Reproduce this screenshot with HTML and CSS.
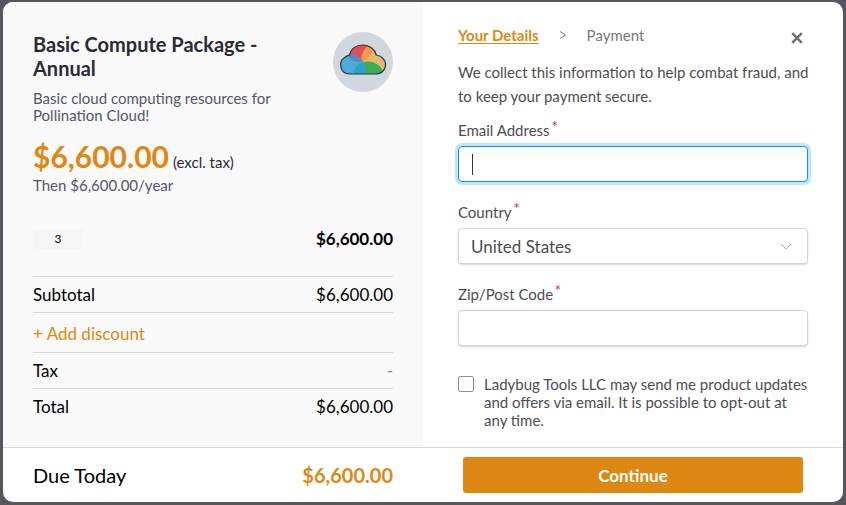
FILE: index.html
```html
<!DOCTYPE html>
<html lang="en">
<head>
<meta charset="utf-8">
<title>Checkout</title>
<link rel="stylesheet" href="styles.css">
</head>
<body>
<form class="checkout">
  <div class="panels">
    <section class="summary">
      <header class="product">
        <div class="product-text">
          <h1 class="product-name">Basic Compute Package - Annual</h1>
          <p class="product-desc">Basic cloud computing resources for Pollination Cloud!</p>
        </div>
        <svg class="product-logo" viewBox="0 0 60 60" aria-hidden="true">
          <defs>
            <clipPath id="cloud"><path d="M16.500 42A9 9 0 0 1 12 25.300Q13.800 23.700 16.500 23.200C18 16.500 23.500 13 29.800 13C36.300 13 41.700 16.800 43.300 23Q47.500 23.700 49.700 26.200A9.200 9.200 0 0 1 43.700 42Z"/></clipPath>
          </defs>
          <circle cx="30" cy="30" r="30" fill="#d0d7df"/>
          <g clip-path="url(#cloud)">
            <rect width="60" height="60" fill="#e8b76c"/>
            <circle cx="23" cy="13" r="17" fill="#e64c55"/>
            <path d="M37 12C31 16 27.500 23 28.500 30C35 28 40 21 40 12Z" fill="#f19a4e"/>
            <circle cx="35" cy="46" r="16.500" fill="#3fab55"/>
            <circle cx="16" cy="40" r="17" fill="#4aaedd"/>
            <path d="M14 23.500C20 20.500 27 23.500 30 29.500C23 31.500 17 28 14 23.500Z" fill="#5e89bd"/>
            <path d="M30 29.500C25 31 20.500 37 20 43H32.500C34 38 33 33 30 29.500Z" fill="#30a3c0"/>
          </g>
          <path d="M16.500 42A9 9 0 0 1 12 25.300Q13.800 23.700 16.500 23.200C18 16.500 23.500 13 29.800 13C36.300 13 41.700 16.800 43.300 23Q47.500 23.700 49.700 26.200A9.200 9.200 0 0 1 43.700 42Z" fill="none" stroke="#333238" stroke-width="1.200"/>
        </svg>
      </header>
      <p class="price"><strong class="price-amount">$6,600.00</strong> <span class="price-note">(excl. tax)</span></p>
      <p class="recurring">Then $6,600.00/year</p>
      <div class="line-item">
        <input class="quantity" type="text" value="3" aria-label="Quantity">
        <strong class="line-amount">$6,600.00</strong>
      </div>
      <div class="totals">
        <div class="row"><span>Subtotal</span><span>$6,600.00</span></div>
        <div class="row row-discount"><button class="discount" type="button">+ Add discount</button></div>
        <div class="row"><span>Tax</span><span class="muted">-</span></div>
        <div class="row"><span>Total</span><span>$6,600.00</span></div>
      </div>
    </section>
    <section class="details">
      <nav class="steps">
        <a class="step-current" href="#details">Your Details</a>
        <svg class="step-arrow" viewBox="0 0 8 10" aria-hidden="true"><path d="M1 1.500L6.500 5L1 8.500"/></svg>
        <span class="step-next">Payment</span>
        <button class="close" type="button" aria-label="Close"><svg viewBox="0 0 12 12" aria-hidden="true"><path d="M1.200 1.200L10.800 10.800M10.800 1.200L1.200 10.800"/></svg></button>
      </nav>
      <p class="intro">We collect this information to help combat fraud, and to keep your payment secure.</p>
      <div class="field">
        <label class="label" for="email">Email Address<span class="required">*</span></label>
        <input class="control" id="email" type="email" autofocus>
      </div>
      <div class="field">
        <label class="label" for="country">Country<span class="required">*</span></label>
        <select class="control select" id="country"><option>United States</option></select>
      </div>
      <div class="field">
        <label class="label" for="zip">Zip/Post Code<span class="required">*</span></label>
        <input class="control" id="zip" type="text">
      </div>
      <div class="consent">
        <input class="checkbox" id="updates" type="checkbox">
        <label for="updates">Ladybug Tools LLC may send me product updates and offers via email. It is possible to opt-out at any time.</label>
      </div>
    </section>
  </div>
  <footer class="footer">
    <div class="due"><span>Due Today</span><strong class="due-amount">$6,600.00</strong></div>
    <div class="action"><button class="continue" type="submit">Continue</button></div>
  </footer>
</form>
</body>
</html>
```
FILE: styles.css
```css
* {
  box-sizing: border-box;
}

body {
  margin: 0;
  padding: 2px 3px 3px;
  background: #57565f;
  font-family: Lato, "Liberation Sans", sans-serif;
  font-size: 15px;
  color: #4d4d4f;
}

h1,
p {
  margin: 0;
}

button,
input,
select {
  font: inherit;
}

.checkout {
  background: #fff;
  border-radius: 10px;
  overflow: hidden;
}

.panels,
.footer {
  display: grid;
  grid-template-columns: 1fr 1fr;
}

.summary {
  padding: 30px 30px 23px;
  background: #f9f9f9;
  color: #000;
}

.product {
  display: flex;
  justify-content: space-between;
  align-items: flex-start;
  gap: 50px;
}

.product-name {
  font-size: 20px;
  line-height: 24px;
  color: #2b2a35;
}

.product-desc {
  margin-top: 10px;
  line-height: 17px;
  color: #55556a;
}

.product-logo {
  flex: none;
  width: 60px;
  height: 60px;
}

.price {
  display: flex;
  align-items: baseline;
  gap: 4px;
  margin-top: 18px;
  line-height: 28px;
  color: #2b2a35;
}

.price-amount {
  font-size: 30px;
  color: #dd8813;
}

.recurring {
  line-height: 18px;
  color: #55556a;
}

.line-item {
  display: flex;
  justify-content: space-between;
  align-items: center;
  margin: 34px 0 26px;
  line-height: 22px;
}

.quantity {
  width: 50px;
  height: 20px;
  padding: 0;
  border: 0;
  border-radius: 3px;
  background: #f5f5f5;
  font-size: 12px;
  text-align: center;
}

.line-amount {
  font-size: 17px;
}

.row {
  display: flex;
  justify-content: space-between;
  align-items: center;
  height: 36px;
  border-top: 1px solid #d8d8d8;
  font-size: 17px;
}

.row-discount {
  height: 40px;
  padding-top: 2px;
}

.discount {
  padding: 0;
  border: 0;
  background: none;
  color: #dd8813;
}

.muted {
  color: #8c8ca0;
}

.details {
  padding: 21px 35px 15px;
}

.steps {
  display: flex;
  align-items: center;
  line-height: 24px;
}

.step-current {
  font-weight: 700;
  color: #dd8813;
  text-underline-offset: 2px;
}

.step-arrow {
  width: 8px;
  height: 10px;
  margin: 0 20px;
  fill: none;
  stroke: #777;
}

.step-next {
  color: #77777a;
}

.close {
  display: flex;
  margin: 6px 5px 0 auto;
  padding: 0;
  border: 0;
  background: none;
}

.close svg {
  width: 12px;
  height: 12px;
  stroke: #707070;
  stroke-width: 2.500;
}

.intro {
  margin: 13px -10px 0 0;
  line-height: 24px;
}

.field {
  margin-top: 11px;
}

.field + .field {
  margin-top: 19px;
}

.label {
  display: block;
  margin-bottom: 5px;
  line-height: 22px;
}

.required {
  position: relative;
  top: -4px;
  left: 2px;
  color: #e0243a;
}

.control {
  display: block;
  width: 100%;
  height: 36px;
  padding: 0 12px;
  border: 1px solid #d4d4d8;
  border-radius: 4px;
  background: #fff;
  box-shadow: 0 1px 2px rgba(50, 50, 80, 0.2);
  font-size: 17px;
  color: #4d4d4f;
  outline: none;
}

.control:focus {
  border-color: #0b96f5;
  box-shadow: 0 0 0 3px #bfe5ff;
  background: linear-gradient(#333, #333) 13px center / 1px 21px no-repeat #fff;
  caret-color: transparent;
}

.select {
  appearance: none;
  background: #fff url("data:image/svg+xml,%3Csvg xmlns='http://www.w3.org/2000/svg' width='12' height='7' fill='none' stroke='%23a9a9bb'%3E%3Cpath d='M1 1l5 5 5-5'/%3E%3C/svg%3E") right 15px center no-repeat;
}

.consent {
  display: flex;
  align-items: flex-start;
  gap: 10px;
  margin-top: 29px;
  line-height: 18px;
}

.checkbox {
  flex: none;
  width: 16px;
  height: 16px;
  margin: 1px 0 0;
  appearance: none;
  border: 1px solid #8f8f9d;
  border-radius: 2px;
  background: #fff;
}

.footer {
  border-top: 1px solid #d8d8d8;
}

.due {
  display: flex;
  justify-content: space-between;
  align-items: center;
  padding: 0 30px;
  font-size: 20px;
  color: #000;
}

.due-amount {
  color: #dd8813;
}

.action {
  padding: 9px 40px;
}

.continue {
  display: block;
  width: 100%;
  height: 36px;
  border: 0;
  border-radius: 3px;
  background: #dd8813;
  color: #fff;
  font-size: 17px;
  font-weight: 700;
}
```
